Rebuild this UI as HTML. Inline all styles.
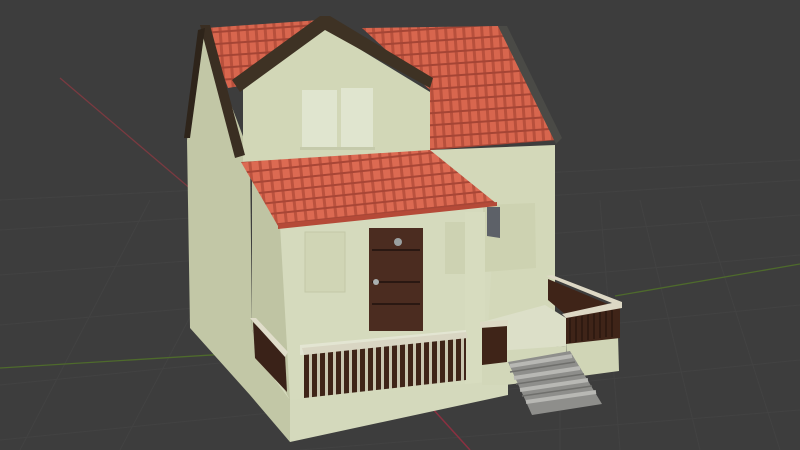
<!DOCTYPE html>
<html><head><meta charset="utf-8"><style>
html,body{margin:0;padding:0;background:#3d3d3d;width:800px;height:450px;overflow:hidden}
</style></head><body>
<svg width="800" height="450" viewBox="0 0 800 450" xmlns="http://www.w3.org/2000/svg">
<defs>
<pattern id="tile" width="9" height="12" patternUnits="userSpaceOnUse" patternTransform="rotate(-4)">
<rect width="9" height="12" fill="#d8664e"/>
<rect x="0" y="0" width="3" height="12" fill="#b8503c"/>
<rect x="0" y="10" width="9" height="2" fill="#a54535"/>
</pattern>
<pattern id="tile2" width="10" height="11" patternUnits="userSpaceOnUse" patternTransform="rotate(-6)">
<rect width="10" height="11" fill="#dc6a52"/>
<rect x="0" y="0" width="3" height="11" fill="#bb523e"/>
<rect x="0" y="9" width="10" height="2" fill="#a84636"/>
</pattern>
<pattern id="rail" width="8" height="60" patternUnits="userSpaceOnUse">
<rect width="8" height="60" fill="#c9c6b0"/>
<rect width="5" height="60" fill="#3f2418"/>
</pattern>
</defs>
<rect width="800" height="450" fill="#3d3d3d"/>
<g stroke="#454545" stroke-width="1" opacity="0.7">
<path d="M0 230 L800 180 M0 275 L800 215 M0 325 L800 255 M0 385 L800 305 M0 440 L800 360 M300 450 L800 410 M0 200 L800 160"/>
<path d="M20 450 L150 200 M120 450 L220 260 M620 450 L600 200 M700 450 L640 200 M780 450 L700 200 M560 450 L560 400"/>
</g>
<path d="M60 78 L192 190" stroke="#7a3a40" stroke-width="1.3"/>
<path d="M432 408 L470 450" stroke="#8a3040" stroke-width="1.5"/>
<path d="M0 368 L260 352" stroke="#4e6a2c" stroke-width="1.3"/>
<path d="M615 296 L800 264" stroke="#4e6a2c" stroke-width="1.3"/>
<!-- left side wall -->
<polygon points="187,140 203,30 250,155 252,330 290,400 290,442 250,395 190,328" fill="#c2c7a6"/>
<!-- main front upper wall right -->
<polygon points="430,90 430,150 555,145 555,320 430,330" fill="#d3d8b9"/>
<!-- gable dormer wall -->
<polygon points="243,85 325,28 430,92 430,152 243,162" fill="#d2d7b7"/>
<rect x="302" y="90" width="35" height="58" fill="#e0e5cf"/>
<rect x="341" y="88" width="32" height="60" fill="#e0e5cf"/>
<rect x="300" y="147" width="75" height="3" fill="#c5caab"/>
<!-- main right roof -->
<polygon points="362,28 498,26 558,140 430,150 430,90" fill="url(#tile)"/>
<polygon points="498,26 507,26 562,138 556,144" fill="#4a4a46"/>
<!-- left upper roof -->
<polygon points="206,28 320,20 240,86 228,88" fill="url(#tile)"/>
<polygon points="200,25 210,25 245,155 235,158" fill="#3a2e22"/>
<polygon points="198,30 205,28 190,138 184,138" fill="#2e241a"/>
<polygon points="232,80 320,16 330,16 433,78 430,88 325,30 240,92" fill="#3e3224"/>
<!-- porch lower wall front -->
<polygon points="275,222 495,205 485,385 300,400 290,400 275,380" fill="#d5dabd"/>
<polygon points="252,175 280,225 290,400 252,330" fill="#bfc4a3"/>
<rect x="445" y="222" width="20" height="52" fill="#cdd2b2"/>
<rect x="305" y="232" width="40" height="60" fill="#d0d5b5" stroke="#c3c8a8"/>
<polygon points="483,205 535,203 536,268 484,272" fill="#cdd2b1"/>
<polygon points="487,207 500,207 500,238 487,236" fill="#5d6168"/>
<rect x="465" y="212" width="20" height="175" fill="#d7dcbf"/>
<!-- porch roof -->
<polygon points="241,162 430,150 497,204 278,226" fill="url(#tile2)"/>
<polygon points="278,224 497,202 497,206 278,229" fill="#b54a38"/>
<!-- door -->
<rect x="369" y="228" width="54" height="103" fill="#4b2c20"/>
<path d="M372 250 H420 M372 282 H420 M372 304 H420" stroke="#2a1812" stroke-width="2"/>
<circle cx="398" cy="242" r="4" fill="#9aa0a0"/>
<circle cx="376" cy="282" r="3" fill="#aab0b0"/>
<!-- porch base -->
<polygon points="290,400 488,382 508,380 508,395 290,442" fill="#d4d9bc"/>
<polygon points="300,345 466,330 466,345 300,355" fill="#e3e5d2"/>
<polygon points="304,352 466,337 466,380 304,398" fill="url(#rail)"/>
<polygon points="302,348 466,332 468,338 304,355" fill="#d9d6c3"/>
<polygon points="253,322 285,355 287,392 255,358" fill="#3a2218"/>
<polygon points="250,318 256,318 288,352 285,357" fill="#e0ddca"/>
<!-- right platform -->
<polygon points="482,322 545,305 566,318 566,346 505,352 482,352" fill="#dcdfc8"/>
<polygon points="482,352 566,346 566,378 505,385 482,385" fill="#d2d7b9"/>
<polygon points="566,338 618,335 619,371 567,378" fill="#d0d5b6"/>
<!-- mid railing -->
<polygon points="482,327 507,325 507,362 482,365" fill="#3f2418"/>
<polygon points="480,322 508,320 508,326 480,328" fill="#ddd9c5"/>
<!-- right railings -->
<polygon points="548,279 610,305 566,318 566,315 548,300" fill="#3f2418"/>
<polygon points="566,316 620,306 620,338 566,344" fill="#3f2418"/>
<path d="M570 318 V343 M576 317 V342 M582 316 V341 M588 315 V340 M594 314 V339 M600 312 V338 M606 311 V337 M612 310 V337" stroke="#2a160f" stroke-width="1.5"/>
<polygon points="546,276 552,275 622,302 622,308 566,318 562,314 612,303" fill="#ddd8c5"/>
<!-- stairs -->
<polygon points="508,362 570,351 602,404 532,415" fill="#8e8e8b"/>
<path d="M510 366 L572 356 M514 378 L580 368 M520 390 L588 380 M526 402 L596 392" stroke="#b8b8b4" stroke-width="4"/>
<path d="M510 372 L575 362 M516 384 L584 374 M522 396 L592 386" stroke="#6f6f6c" stroke-width="1.5"/>
</svg>
</body></html>
